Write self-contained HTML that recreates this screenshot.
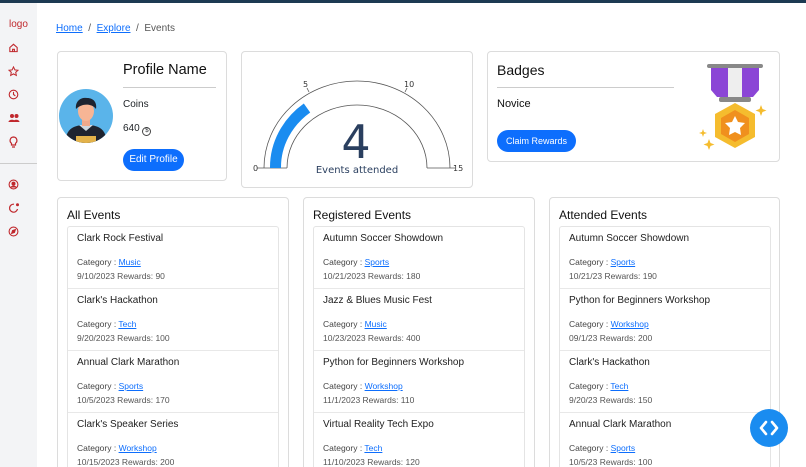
<!DOCTYPE html>
<html style="overflow:hidden;width:806px;height:467px"><head><meta charset="utf-8"><style>
*{box-sizing:border-box;margin:0;padding:0}
body{width:806px;height:467px;overflow:hidden;background:#fff;font-family:"Liberation Sans",sans-serif;color:#212529;position:relative}
.top{position:absolute;left:0;top:0;width:806px;height:3px;background:#1d3a52}
.side{position:absolute;left:0;top:3px;width:37px;height:464px;background:#f3f4f6}
.side .logo{position:absolute;left:9px;top:16px;color:#c0282d;font-size:10px}
.side svg{position:absolute;left:8px}
.side .hr{position:absolute;left:0;top:160px;width:37px;height:1px;background:#ccc}
.bc{position:absolute;left:56px;top:23px;font-size:10px;color:#555}
.bc a{color:#0d6efd;text-decoration:underline}
.card{position:absolute;border:1px solid #dcdcdc;border-radius:4px;background:#fff;overflow:hidden}
.btn{position:absolute;background:#0d6efd;color:#fff;border-radius:12px;font-size:10px;text-align:center}
.col h3{position:absolute;left:9px;top:10px;font-size:12px;font-weight:normal;color:#111}
.list{position:absolute;left:9px;top:28px;width:212px;border:1px solid #e4e4e4;border-radius:3px}
.it{height:62px;border-bottom:1px solid #e8e8e8;position:relative}
.it .t{position:absolute;left:9px;top:6px;font-size:10px;color:#222}
.it .c{position:absolute;left:9px;top:30px;font-size:8.5px;color:#444}
.it .c a{color:#0d6efd;text-decoration:underline}
.it .d{position:absolute;left:9px;top:44px;font-size:8.5px;color:#555}
</style></head><body>
<div class="top"></div>
<div class="side">
<div class="logo">logo</div>
<svg style="top:39px" width="11" height="11" viewBox="0 0 12 12" fill="none" stroke="#c0282d" stroke-width="1.2"><path d="M2 6L6 2.5 10 6V10.5H2Z"/><path d="M5 10.5V8h2v2.5"/></svg>
<svg style="top:63px" width="11" height="11" viewBox="0 0 12 12" fill="none" stroke="#c0282d" stroke-width="1.1"><path d="M6 1l1.5 3.2 3.4.4-2.5 2.3.7 3.4L6 8.6 2.9 10.3l.7-3.4L1.1 4.6l3.4-.4z"/></svg>
<svg style="top:86px" width="11" height="11" viewBox="0 0 12 12" fill="none" stroke="#c0282d" stroke-width="1.2"><circle cx="6" cy="6" r="4.7"/><path d="M6 3.2V6l2 1.5"/></svg>
<svg style="top:110px" width="12" height="11" viewBox="0 0 12 11" fill="#c0282d"><circle cx="4" cy="3" r="2"/><circle cx="8.5" cy="3" r="2"/><path d="M0.5 9c0-3 7-3 7 0zM5 9c0-3 6.5-3 6.5 0z"/></svg>
<svg style="top:133px" width="11" height="12" viewBox="0 0 11 12" fill="none" stroke="#c0282d" stroke-width="1.2"><path d="M5.5 1a3.5 3.5 0 0 0-2 6.3V9h4V7.3A3.5 3.5 0 0 0 5.5 1zM4 11h3"/></svg>
<div class="hr"></div>
<svg style="top:176px" width="11" height="11" viewBox="0 0 12 12" fill="none" stroke="#c0282d" stroke-width="1.2"><circle cx="6" cy="6" r="4.8"/><circle cx="6" cy="5" r="1.6" fill="#c0282d"/><path d="M3 9.3c1.5-2 4.5-2 6 0" fill="#c0282d"/></svg>
<svg style="top:199px" width="12" height="12" viewBox="0 0 12 12" fill="none" stroke="#c0282d" stroke-width="1.2"><path d="M9.5 7A4 4 0 1 1 6 2.2"/><circle cx="9.5" cy="2.8" r="1.5" fill="#c0282d" stroke="none"/></svg>
<svg style="top:223px" width="11" height="11" viewBox="0 0 12 12" fill="none" stroke="#c0282d" stroke-width="1.2"><circle cx="6" cy="6" r="4.8"/><path d="M8 4L7 7 4 8 5 5z" fill="#c0282d"/></svg>
</div>
<div class="bc"><a>Home</a> &nbsp;/&nbsp; <a>Explore</a> &nbsp;/&nbsp; Events</div>

<div class="card" style="left:57px;top:51px;width:170px;height:130px">
<svg style="position:absolute;left:1px;top:37px" width="54" height="54" viewBox="0 0 54 54"><defs><clipPath id="cp"><circle cx="27" cy="27" r="27"/></clipPath></defs><circle cx="27" cy="27" r="27" fill="#5ab4ea"/><g clip-path="url(#cp)"><path d="M6 54c1-14 8-18 21-18s20 4 21 18z" fill="#1f2430"/><rect x="17" y="47" width="20" height="8" fill="#e3b24a"/><path d="M20 36l7 6 7-6z" fill="#cfd8e0"/><rect x="23" y="28" width="8" height="9" fill="#f0a98b"/><ellipse cx="27" cy="22" rx="8" ry="10" fill="#f7b595"/><path d="M17 20c-1-8 5-12 11-11 7 0 10 5 9 11-3-4-8-5-13-4-3 1-5 2-7 4z" fill="#1d2330"/></g></svg>
<div style="position:absolute;left:65px;top:10px;font-size:14.5px;color:#111">Profile Name</div>
<div style="position:absolute;left:65px;top:35px;width:93px;height:1px;background:#ccc"></div>
<div style="position:absolute;left:65px;top:47px;font-size:10px">Coins</div>
<div style="position:absolute;left:65px;top:71px;font-size:10px">640 <span style="display:inline-block;width:9px;height:9px;border:1px solid #444;border-radius:50%;font-size:6px;text-align:center;line-height:7px;vertical-align:-1px">$</span></div>
<div class="btn" style="left:65px;top:97px;width:61px;height:22px;line-height:22px">Edit Profile</div>
</div>

<div class="card" style="left:241px;top:51px;width:232px;height:137px">
<svg style="position:absolute;left:0;top:0" width="232" height="137" viewBox="0 0 232 137">
<path d="M22 116 A93 87 0 0 1 208 116" fill="none" stroke="#555" stroke-width="0.8"/>
<path d="M45 116 A70 63 0 0 1 185 116" fill="none" stroke="#555" stroke-width="0.8"/>
<line x1="15" y1="116" x2="45" y2="116" stroke="#555" stroke-width="0.8"/>
<line x1="185" y1="116" x2="213" y2="116" stroke="#555" stroke-width="0.8"/>
<path d="M33.5 116 A81.5 75 0 0 1 65 56" fill="none" stroke="#1a8cf0" stroke-width="11"/>
<line x1="65" y1="36" x2="67" y2="40" stroke="#555" stroke-width="0.8"/>
<line x1="165" y1="36" x2="163" y2="40" stroke="#555" stroke-width="0.8"/>
<g font-family="DejaVu Sans,sans-serif" font-size="8" fill="#333"><text x="11" y="119">0</text><text x="61" y="35">5</text><text x="162" y="35">10</text><text x="211" y="119">15</text></g>
<text x="114" y="106" text-anchor="middle" font-family="DejaVu Sans,sans-serif" font-size="46" fill="#2a3f5f">4</text>
<text x="115" y="121" text-anchor="middle" font-family="DejaVu Sans,sans-serif" font-size="10" fill="#2a3f5f">Events attended</text>
</svg></div>

<div class="card" style="left:487px;top:51px;width:293px;height:111px">
<div style="position:absolute;left:9px;top:10px;font-size:14px;color:#111">Badges</div>
<div style="position:absolute;left:9px;top:35px;width:177px;height:1px;background:#ccc"></div>
<div style="position:absolute;left:9px;top:46px;font-size:11px;color:#111">Novice</div>
<div class="btn" style="left:9px;top:78px;width:79px;height:22px;line-height:22px;font-size:9px">Claim Rewards</div>
<svg style="position:absolute;left:205px;top:5px" width="80" height="100" viewBox="0 0 80 100">
<rect x="14" y="7" width="56" height="4" rx="2" fill="#888"/>
<path d="M18 11h48v22l-6 7H24l-6-7z" fill="#8b45d6"/>
<rect x="35" y="11" width="14" height="29" fill="#eee"/>
<rect x="26" y="40" width="32" height="5" rx="2" fill="#888"/>
<path d="M42 46l20 11v23L42 91 22 80V57z" fill="#f5bc2e"/>
<path d="M42 53l14 8v16l-14 8-14-8V61z" fill="#f0901e"/>
<path d="M42 59l3 6 7 1-5 5 1 7-6-3-6 3 1-7-5-5 7-1z" fill="#fff"/>
<path d="M68 48l1.5 4 4 1.5-4 1.5-1.5 4-1.5-4-4-1.5 4-1.5z" fill="#f5bc2e"/>
<path d="M10 72l1 3 3 1-3 1-1 3-1-3-3-1 3-1z" fill="#f5bc2e"/>
<path d="M16 82l1.5 4 4 1.5-4 1.5-1.5 4-1.5-4-4-1.5 4-1.5z" fill="#f5bc2e"/>
</svg></div>

<div class="card col" style="left:57px;top:197px;width:232px;height:280px"><h3>All Events</h3><div class="list">
<div class="it"><div class="t">Clark Rock Festival</div><div class="c">Category : <a>Music</a></div><div class="d">9/10/2023 Rewards: 90</div></div>
<div class="it"><div class="t">Clark's Hackathon</div><div class="c">Category : <a>Tech</a></div><div class="d">9/20/2023 Rewards: 100</div></div>
<div class="it"><div class="t">Annual Clark Marathon</div><div class="c">Category : <a>Sports</a></div><div class="d">10/5/2023 Rewards: 170</div></div>
<div class="it"><div class="t">Clark's Speaker Series</div><div class="c">Category : <a>Workshop</a></div><div class="d">10/15/2023 Rewards: 200</div></div>
</div></div>

<div class="card col" style="left:303px;top:197px;width:232px;height:280px"><h3>Registered Events</h3><div class="list">
<div class="it"><div class="t">Autumn Soccer Showdown</div><div class="c">Category : <a>Sports</a></div><div class="d">10/21/2023 Rewards: 180</div></div>
<div class="it"><div class="t">Jazz &amp; Blues Music Fest</div><div class="c">Category : <a>Music</a></div><div class="d">10/23/2023 Rewards: 400</div></div>
<div class="it"><div class="t">Python for Beginners Workshop</div><div class="c">Category : <a>Workshop</a></div><div class="d">11/1/2023 Rewards: 110</div></div>
<div class="it"><div class="t">Virtual Reality Tech Expo</div><div class="c">Category : <a>Tech</a></div><div class="d">11/10/2023 Rewards: 120</div></div>
</div></div>

<div class="card col" style="left:549px;top:197px;width:231px;height:280px"><h3>Attended Events</h3><div class="list">
<div class="it"><div class="t">Autumn Soccer Showdown</div><div class="c">Category : <a>Sports</a></div><div class="d">10/21/23 Rewards: 190</div></div>
<div class="it"><div class="t">Python for Beginners Workshop</div><div class="c">Category : <a>Workshop</a></div><div class="d">09/1/23 Rewards: 200</div></div>
<div class="it"><div class="t">Clark's Hackathon</div><div class="c">Category : <a>Tech</a></div><div class="d">9/20/23 Rewards: 150</div></div>
<div class="it"><div class="t">Annual Clark Marathon</div><div class="c">Category : <a>Sports</a></div><div class="d">10/5/23 Rewards: 100</div></div>
</div></div>

<div style="position:absolute;left:750px;top:409px;width:38px;height:38px;border-radius:50%;background:#1a8cf0"></div>
<svg style="position:absolute;left:750px;top:409px" width="38" height="38" viewBox="0 0 38 38" fill="none" stroke="#fff" stroke-width="2.6" stroke-linecap="round" stroke-linejoin="round"><path d="M16 13l-5 6 5 6M22 13l5 6-5 6"/></svg>
</body></html>
